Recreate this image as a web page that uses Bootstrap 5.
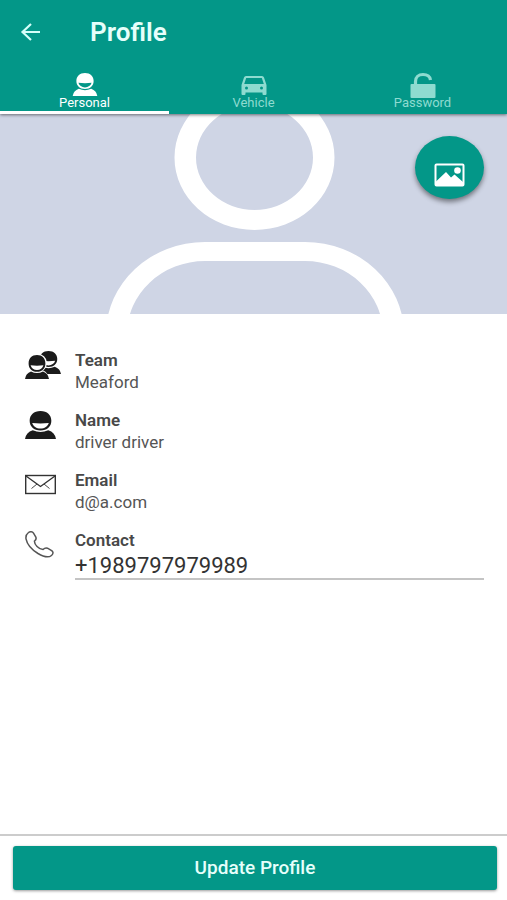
<!DOCTYPE html>
<html lang="en">
<head>
<meta charset="utf-8">
<meta name="viewport" content="width=device-width, initial-scale=1">
<title>Profile</title>
<link href="https://cdn.jsdelivr.net/npm/bootstrap@5.3.0/dist/css/bootstrap.min.css" rel="stylesheet">
<style>
body { font-family: Roboto, "Liberation Sans", sans-serif; color: #555; background: #fff; }
svg { display: block; flex: none; }
.app-top { background: #039788; color: #fff; box-shadow: 0 1px 3px rgba(0,0,0,.5); z-index: 2; }
.title-row { height: 64px; padding-left: 20px; gap: 48px; }
.page-title { font-size: 26px; line-height: 32px; font-weight: 600; color: #e6fffb; }
.tab-btn { height: 50px; padding: 9px 0 0; border: 0; border-bottom: 3px solid transparent; background: none; color: #8edbd0; font-size: 13px; line-height: 14px; }
.tab-btn.active { color: #fff; border-bottom-color: #fff; }
.hero { background: #cfd5e5; }
.hero > svg { height: 200px; }
.photo-btn { top: 22px; right: 23px; width: 69px; height: 63px; padding: 14px 0 0; border-radius: 50%; background: #039788; box-shadow: 0 3px 5px rgba(0,0,0,.45); }
.info { padding: 35px 23px 0 25px; }
.info-row { min-height: 60px; }
.info-icon { width: 50px; padding-top: 2px; }
.info-row dt, .info-row dd, .info-row label { font-size: 17px; line-height: 22px; }
.info-row dt { font-weight: 600; color: #484848; }
.phone-input { font-size: 22px; line-height: 28px; height: 29px; color: #333; border: 0; border-bottom: 2px solid #c4c4c4; border-radius: 0; padding: 2px 0 0; }
.bottom-bar { border-top: 2px solid #ccc; padding: 10px 10px 10px 13px; }
.update-btn { height: 44px; padding: 0; background: #039788; color: #e6fffb; font-size: 19px; line-height: 42px; font-weight: 500; border: 0; border-radius: 3px; box-shadow: 0 1px 3px rgba(0,0,0,.4); }
.update-btn:hover, .photo-btn:hover { background: #038476; color: #fff; }
</style>
</head>
<body>
<svg width="0" height="0" class="position-absolute" aria-hidden="true">
  <symbol id="person" viewBox="0 0 30 28">
    <path fill-rule="evenodd" d="M15 0C21.500 0 25.500 4 25.500 9.800S21.500 19.500 15 19.500 4.500 15.600 4.500 9.800 8.500 0 15 0ZM7 12C8 15.500 11 17.500 15 17.500S22 15.500 23 12Q15 12.800 7 12Z"/>
    <path d="M0 28Q1 21.500 7.500 19.300Q15 22.800 22.500 19.300Q29 21.500 30 28Z"/>
  </symbol>
</svg>
<div class="d-flex flex-column min-vh-100">
  <header class="app-top position-relative">
    <div class="title-row d-flex align-items-center">
      <button class="btn p-0 border-0" type="button" aria-label="Back">
        <svg width="22" height="20" viewBox="0 0 22 20" fill="none" stroke="#d5fff9" stroke-width="2.200"><path d="M20 10H3M11 2 2.500 10 11 18"/></svg>
      </button>
      <h1 class="page-title m-0">Profile</h1>
    </div>
    <nav class="row g-0" role="tablist">
      <button class="tab-btn active col d-flex flex-column align-items-center" type="button" role="tab" aria-selected="true">
        <svg width="26" height="23" fill="currentColor"><use href="#person"/></svg>
        Personal
      </button>
      <button class="tab-btn col d-flex flex-column align-items-center" type="button" role="tab" aria-selected="false">
        <svg width="26" height="23" viewBox="0 0 26 23" fill="currentColor"><path fill-rule="evenodd" d="M5 3H21Q22.500 3 23 4.500L25.500 12V21Q25.500 22 24.500 22H22.500Q21.500 22 21.500 21V19.500H4.500V21Q4.500 22 3.500 22H1.500Q.5 22 .5 21V12L3 4.500Q3.500 3 5 3ZM5.200 5 3.200 11H22.800L20.800 5ZM5.500 13.500A1.500 1.500 0 1 0 5.500 16.500 1.500 1.500 0 1 0 5.500 13.500ZM20.500 13.500A1.500 1.500 0 1 0 20.500 16.500 1.500 1.500 0 1 0 20.500 13.500Z"/></svg>
        Vehicle
      </button>
      <button class="tab-btn col d-flex flex-column align-items-center" type="button" role="tab" aria-selected="false">
        <svg class="overflow-visible" width="26" height="23" viewBox="0 0 26 23"><rect x=".5" y="11" width="25" height="14" rx="1" fill="currentColor"/><path d="M5.500 12V8.500C5.500 4 8.500 1.500 13 1.500 17 1.500 20 3.500 20.500 7" fill="none" stroke="currentColor" stroke-width="3.200"/></svg>
        Password
      </button>
    </nav>
  </header>
  <main class="flex-grow-1">
    <div class="hero position-relative">
      <svg class="w-100" viewBox="0 0 507 200" preserveAspectRatio="xMidYMid slice" role="img" aria-label="Profile photo">
        <g fill="#fff" fill-rule="evenodd">
          <path d="M174.500 43.500A80 72.500 0 1 1 334.500 43.500 80 72.500 0 1 1 174.500 43.500ZM196 43.500A58.500 52.500 0 1 0 313 43.500 58.500 52.500 0 1 0 196 43.500Z"/>
          <path d="M106 220A99 92 0 0 1 205 128H305A99 92 0 0 1 404 220H383A78 73 0 0 0 305 147H205A78 73 0 0 0 127 220Z"/>
        </g>
      </svg>
      <button class="photo-btn btn border-0 position-absolute d-flex align-items-center justify-content-center" type="button" aria-label="Choose photo">
        <svg width="31" height="24" viewBox="0 0 31 24"><rect x="1.500" y="1.500" width="28" height="21" rx="1" fill="none" stroke="#fff" stroke-width="2"/><path d="M2 23V18.500L12 9 17 14.500 20.500 11.500 29 19V23Z" fill="#fff"/><circle cx="23.500" cy="7.500" r="3.300" fill="#fff"/></svg>
      </button>
    </div>
    <dl class="info m-0">
      <div class="info-row d-flex">
        <div class="info-icon flex-shrink-0">
          <svg class="overflow-visible" width="36" height="28" viewBox="0 0 36 28" fill="#1b1b1b">
            <svg x="11" y="0" width="25" height="23" viewBox="0 0 30 28" preserveAspectRatio="none"><use href="#person" width="30" height="28"/></svg>
            <g fill="#fff" stroke="#fff" stroke-width="2"><ellipse cx="12" cy="12" rx="9" ry="8.500"/><path d="M1 28Q2 22 6 20.500H18Q22 22 23 28Z"/></g>
            <svg x="0" y="4" width="24" height="24" viewBox="0 0 30 28" preserveAspectRatio="none"><use href="#person" width="30" height="28"/></svg>
          </svg>
        </div>
        <div><dt>Team</dt><dd class="m-0">Meaford</dd></div>
      </div>
      <div class="info-row d-flex">
        <div class="info-icon flex-shrink-0"><svg width="31" height="28" fill="#1b1b1b" viewBox="0 0 31 28"><svg width="31" height="28" viewBox="0 0 30 28" preserveAspectRatio="none"><use href="#person" width="30" height="28"/></svg></svg></div>
        <div><dt>Name</dt><dd class="m-0">driver driver</dd></div>
      </div>
      <div class="info-row d-flex">
        <div class="info-icon flex-shrink-0"><svg width="31" height="25" viewBox="0 0 31 25" fill="none" stroke="#333"><rect x=".7" y="4.500" width="29.600" height="18" stroke-width="1.400"/><path d="M1 5 15.500 15.500 30 5" stroke-width="1.400"/><path d="M6.500 17.500 12 13M24.500 17.500 19 13" stroke-width=".9"/></svg></div>
        <div><dt>Email</dt><dd class="m-0">d@a.com</dd></div>
      </div>
      <div class="info-row d-flex">
        <div class="info-icon flex-shrink-0"><svg width="29" height="28" viewBox="0 0 29 28" fill="none" stroke="#555" stroke-width="1.500"><path d="M3.500 1.500C5 .3 7.500.6 8.500 2.200L10.700 5.800C11.500 7.500 11 9 9.500 10C9 13.500 14 18.500 18 18.600C19.500 17 21 16.500 22.500 17.200L27 19.800C28.500 21 28.300 23 26.500 24.500C23 27.300 18 25.500 13 22.500C7 18.700 2 12.800 1 7.800C.6 4.800 1.500 3 3.500 1.500Z"/></svg></div>
        <div class="flex-grow-1"><dt><label class="d-block" for="contact">Contact</label></dt><dd class="m-0"><input class="phone-input form-control shadow-none" id="contact" type="tel" value="+1989797979989"></dd></div>
      </div>
    </dl>
  </main>
  <footer class="bottom-bar">
    <button class="update-btn btn w-100" type="button">Update Profile</button>
  </footer>
</div>
<script src="https://cdn.jsdelivr.net/npm/bootstrap@5.3.0/dist/js/bootstrap.bundle.min.js"></script>
</body>
</html>
